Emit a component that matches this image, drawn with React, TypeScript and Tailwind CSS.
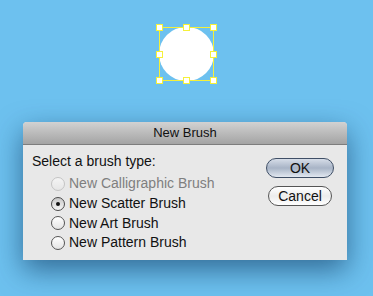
import React from 'react';

function Radio({ checked, disabled }: { checked?: boolean; disabled?: boolean }) {
  return (
    <span
      className={`w-[14px] h-[14px] rounded-full border flex items-center justify-center shrink-0 ${
        disabled
          ? 'border-[#c4c4c4] bg-gradient-to-b from-[#f4f4f4] to-[#e6e6e6]'
          : checked
          ? 'border-[#4a4a4a] bg-gradient-to-b from-[#c8c8c8] to-[#f6f6f6]'
          : 'border-[#555] bg-gradient-to-b from-[#ffffff] to-[#e4e4e4]'
      }`}
    >
      {checked && <span className="w-[4px] h-[4px] rounded-full bg-[#111]" />}
    </span>
  );
}

function Handle() {
  return <span className="w-[7px] h-[7px] bg-white border border-[#f5f03a]" />;
}

export default function App() {
  const options = [
    { label: 'New Calligraphic Brush', disabled: true },
    { label: 'New Scatter Brush', checked: true },
    { label: 'New Art Brush' },
    { label: 'New Pattern Brush' },
  ];

  return (
    <div
      className="w-[373px] h-[296px] bg-[#6dc1ef] overflow-hidden"
      style={{ fontFamily: '"Liberation Sans", Arial, sans-serif' }}
    >
      {/* Artboard selection */}
      <div className="pt-[24px] pl-[156px] h-[122px]">
        <div className="relative w-[61px] h-[60px]">
          <div className="absolute inset-[3px] rounded-full bg-white" />
          <div className="absolute inset-[3px] border border-[#f5f03a]" />
          <div className="absolute inset-0 flex flex-col justify-between">
            <div className="flex justify-between"><Handle /><Handle /><Handle /></div>
            <div className="flex justify-between"><Handle /><Handle /></div>
            <div className="flex justify-between"><Handle /><Handle /><Handle /></div>
          </div>
        </div>
      </div>

      {/* Dialog */}
      <div className="ml-[23px] w-[324px] h-[138px] rounded-t-[4px] bg-[#e8e8e8] shadow-[0_10px_28px_rgba(10,50,90,0.6)] flex flex-col">
        <div className="h-[23px] rounded-t-[4px] bg-gradient-to-b from-[#d2d2d2] to-[#a4a4a4] border-b border-[#7d7d7d] flex items-center justify-center text-[13px] text-[#111]">
          New Brush
        </div>
        <div className="flex flex-1">
          <div className="flex-1 pl-[9px] pt-[8px]">
            <div className="text-[14px] text-[#111] leading-[16px]">Select a brush type:</div>
            <div className="mt-[5px] pl-[19px] flex flex-col">
              {options.map((o) => (
                <div key={o.label} className="h-[19.7px] flex items-center gap-[4px]">
                  <Radio checked={o.checked} disabled={o.disabled} />
                  <span className={`text-[14px] ${o.disabled ? 'text-[#7f7f7f]' : 'text-[#111]'}`}>
                    {o.label}
                  </span>
                </div>
              ))}
            </div>
          </div>
          <div className="w-[81px] pt-[13px] flex flex-col gap-[8px]">
            <button className="w-[68px] h-[20px] rounded-full border border-[#3f4f66] bg-gradient-to-b from-[#d6dde8] via-[#a8b4c6] to-[#e2e8f0] text-[14px] text-[#111] leading-none">
              OK
            </button>
            <button className="ml-[2px] w-[64px] h-[20px] rounded-full border border-[#555] bg-gradient-to-b from-[#ffffff] via-[#ececec] to-[#ffffff] text-[14px] text-[#111] leading-none">
              Cancel
            </button>
          </div>
        </div>
      </div>
    </div>
  );
}
